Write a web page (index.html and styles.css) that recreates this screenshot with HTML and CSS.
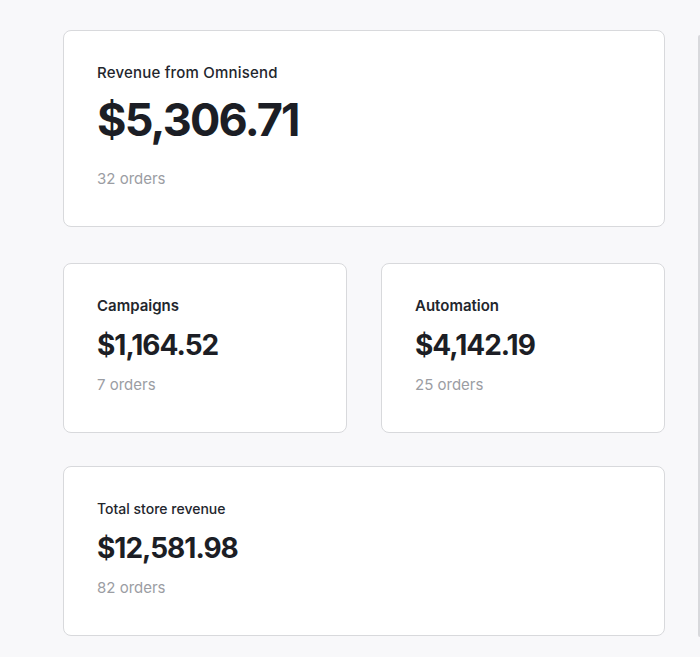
FILE: index.html
```html
<!DOCTYPE html>
<html lang="en">

<head>
    <meta charset="UTF-8">
    <meta name="viewport" content="width=device-width, initial-scale=1.0">
    <title>Revenue overview</title>
    <link rel="stylesheet" href="styles.css">
</head>

<body>
    <div class="page">
        <main class="stats">
            <section class="card card-main">
                <p class="card-label">Revenue from Omnisend</p>
                <p class="card-value">$5,306.71</p>
                <p class="card-orders">32 orders</p>
            </section>

            <div class="card-row">
                <section class="card card-split">
                    <p class="card-label">Campaigns</p>
                    <p class="card-value">$1,164.52</p>
                    <p class="card-orders">7 orders</p>
                </section>
                <section class="card card-split">
                    <p class="card-label">Automation</p>
                    <p class="card-value">$4,142.19</p>
                    <p class="card-orders">25 orders</p>
                </section>
            </div>

            <section class="card">
                <p class="card-label">Total store revenue</p>
                <p class="card-value">$12,581.98</p>
                <p class="card-orders">82 orders</p>
            </section>
        </main>

        <!-- next panel, cut off by the window -->
        <aside class="side-panel"></aside>
    </div>
</body>

</html>
```

FILE: styles.css
```css
body {
    font-family: Inter, 'Noto Sans', sans-serif;
    margin: 0;
    padding: 0;
    background-color: #f8f8fa;
    color: #1c1e25;
    overflow: hidden;
}

.page {
    display: flex;
    align-items: flex-start;
    gap: 33px;
    padding: 30px 0 0 63px;
}

.stats {
    width: 602px;
    flex-shrink: 0;
    display: flex;
    flex-direction: column;
    gap: 36px;
}

.card-row {
    display: grid;
    grid-template-columns: 1fr 1fr;
    gap: 34px;
    margin-bottom: -3px;
}

.card {
    background-color: #fff;
    border: 1px solid #d8d9dc;
    border-radius: 8px;
    padding: 32px 33px 37px;
}

.card p {
    margin: 0;
}

.card-label {
    font-size: 14px;
    font-weight: 500;
    line-height: 20px;
    color: #23262d;
}

.card-value {
    font-size: 28px;
    font-weight: 700;
    line-height: 34px;
    margin-top: 12px !important;
    letter-spacing: -1px;
}

.card-orders {
    font-size: 15px;
    line-height: 20px;
    color: #9b9da3;
    margin-top: 13px !important;
}

.card-split .card-label {
    font-size: 15px;
    font-weight: 600;
}

.card-main .card-label {
    font-size: 15px;
    letter-spacing: 0.2px;
}

.card-main .card-value {
    font-size: 45px;
    line-height: 54px;
    margin-top: 10px !important;
    letter-spacing: -1.8px;
}

.card-main .card-orders {
    margin-top: 22px !important;
}

.side-panel {
    flex: 1;
    min-width: 0;
    height: 602px;
    margin-top: 5px;
    border-left: 2px solid #d8d9dc;
    border-top-left-radius: 8px;
    border-bottom-left-radius: 8px;
}
```
